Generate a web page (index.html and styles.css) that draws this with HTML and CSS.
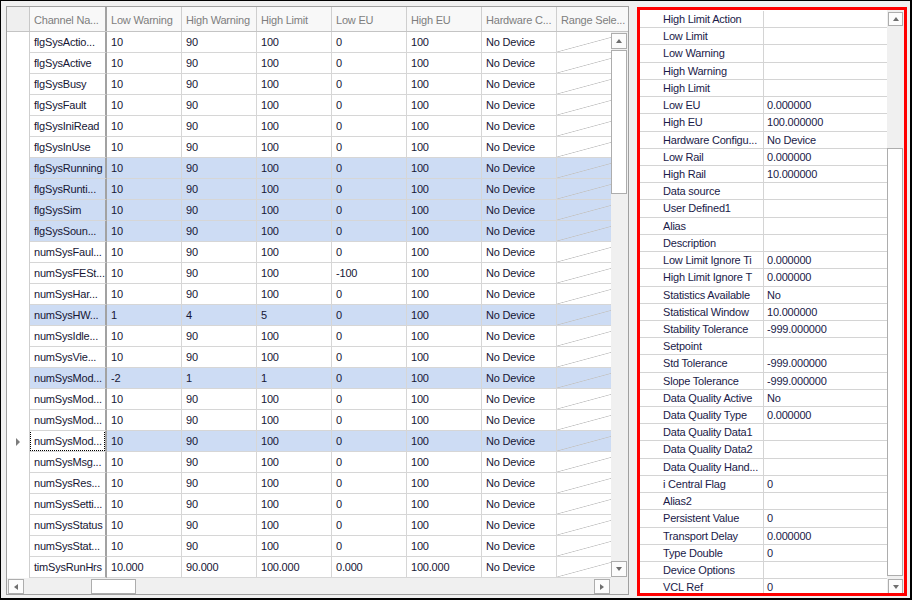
FILE: index.html
```html
<!DOCTYPE html>
<html>
<head>
<meta charset="utf-8">
<link rel="stylesheet" href="styles.css">
</head>
<body>
<div class="window">
  <div class="grid">
    <div class="ghead">
      <div class="hc ind"></div>
      <div class="hc name">Channel Na...</div>
      <div class="hc">Low Warning</div>
      <div class="hc">High Warning</div>
      <div class="hc">High Limit</div>
      <div class="hc">Low EU</div>
      <div class="hc">High EU</div>
      <div class="hc">Hardware C...</div>
      <div class="hc">Range Sele...</div>
    </div>
    <div class="gbody">
      <div class="rows">
        <div class="row"><div class="ind"></div><div class="c name">flgSysActio...</div><div class="c">10</div><div class="c">90</div><div class="c">100</div><div class="c">0</div><div class="c">100</div><div class="c">No Device</div><div class="c rng"></div></div>
        <div class="row"><div class="ind"></div><div class="c name">flgSysActive</div><div class="c">10</div><div class="c">90</div><div class="c">100</div><div class="c">0</div><div class="c">100</div><div class="c">No Device</div><div class="c rng"></div></div>
        <div class="row"><div class="ind"></div><div class="c name">flgSysBusy</div><div class="c">10</div><div class="c">90</div><div class="c">100</div><div class="c">0</div><div class="c">100</div><div class="c">No Device</div><div class="c rng"></div></div>
        <div class="row"><div class="ind"></div><div class="c name">flgSysFault</div><div class="c">10</div><div class="c">90</div><div class="c">100</div><div class="c">0</div><div class="c">100</div><div class="c">No Device</div><div class="c rng"></div></div>
        <div class="row"><div class="ind"></div><div class="c name">flgSysIniRead</div><div class="c">10</div><div class="c">90</div><div class="c">100</div><div class="c">0</div><div class="c">100</div><div class="c">No Device</div><div class="c rng"></div></div>
        <div class="row"><div class="ind"></div><div class="c name">flgSysInUse</div><div class="c">10</div><div class="c">90</div><div class="c">100</div><div class="c">0</div><div class="c">100</div><div class="c">No Device</div><div class="c rng"></div></div>
        <div class="row hl"><div class="ind"></div><div class="c name">flgSysRunning</div><div class="c">10</div><div class="c">90</div><div class="c">100</div><div class="c">0</div><div class="c">100</div><div class="c">No Device</div><div class="c rng"></div></div>
        <div class="row hl"><div class="ind"></div><div class="c name">flgSysRunti...</div><div class="c">10</div><div class="c">90</div><div class="c">100</div><div class="c">0</div><div class="c">100</div><div class="c">No Device</div><div class="c rng"></div></div>
        <div class="row hl"><div class="ind"></div><div class="c name">flgSysSim</div><div class="c">10</div><div class="c">90</div><div class="c">100</div><div class="c">0</div><div class="c">100</div><div class="c">No Device</div><div class="c rng"></div></div>
        <div class="row hl"><div class="ind"></div><div class="c name">flgSysSoun...</div><div class="c">10</div><div class="c">90</div><div class="c">100</div><div class="c">0</div><div class="c">100</div><div class="c">No Device</div><div class="c rng"></div></div>
        <div class="row"><div class="ind"></div><div class="c name">numSysFaul...</div><div class="c">10</div><div class="c">90</div><div class="c">100</div><div class="c">0</div><div class="c">100</div><div class="c">No Device</div><div class="c rng"></div></div>
        <div class="row"><div class="ind"></div><div class="c name">numSysFESt...</div><div class="c">10</div><div class="c">90</div><div class="c">100</div><div class="c">-100</div><div class="c">100</div><div class="c">No Device</div><div class="c rng"></div></div>
        <div class="row"><div class="ind"></div><div class="c name">numSysHar...</div><div class="c">10</div><div class="c">90</div><div class="c">100</div><div class="c">0</div><div class="c">100</div><div class="c">No Device</div><div class="c rng"></div></div>
        <div class="row hl"><div class="ind"></div><div class="c name">numSysHW...</div><div class="c">1</div><div class="c">4</div><div class="c">5</div><div class="c">0</div><div class="c">100</div><div class="c">No Device</div><div class="c rng"></div></div>
        <div class="row"><div class="ind"></div><div class="c name">numSysIdle...</div><div class="c">10</div><div class="c">90</div><div class="c">100</div><div class="c">0</div><div class="c">100</div><div class="c">No Device</div><div class="c rng"></div></div>
        <div class="row"><div class="ind"></div><div class="c name">numSysVie...</div><div class="c">10</div><div class="c">90</div><div class="c">100</div><div class="c">0</div><div class="c">100</div><div class="c">No Device</div><div class="c rng"></div></div>
        <div class="row hl"><div class="ind"></div><div class="c name">numSysMod...</div><div class="c">-2</div><div class="c">1</div><div class="c">1</div><div class="c">0</div><div class="c">100</div><div class="c">No Device</div><div class="c rng"></div></div>
        <div class="row"><div class="ind"></div><div class="c name">numSysMod...</div><div class="c">10</div><div class="c">90</div><div class="c">100</div><div class="c">0</div><div class="c">100</div><div class="c">No Device</div><div class="c rng"></div></div>
        <div class="row"><div class="ind"></div><div class="c name">numSysMod...</div><div class="c">10</div><div class="c">90</div><div class="c">100</div><div class="c">0</div><div class="c">100</div><div class="c">No Device</div><div class="c rng"></div></div>
        <div class="row hl sel"><div class="ind"><span class="rowmark"></span></div><div class="c name focus">numSysMod...</div><div class="c">10</div><div class="c">90</div><div class="c">100</div><div class="c">0</div><div class="c">100</div><div class="c">No Device</div><div class="c rng"></div></div>
        <div class="row"><div class="ind"></div><div class="c name">numSysMsg...</div><div class="c">10</div><div class="c">90</div><div class="c">100</div><div class="c">0</div><div class="c">100</div><div class="c">No Device</div><div class="c rng"></div></div>
        <div class="row"><div class="ind"></div><div class="c name">numSysRes...</div><div class="c">10</div><div class="c">90</div><div class="c">100</div><div class="c">0</div><div class="c">100</div><div class="c">No Device</div><div class="c rng"></div></div>
        <div class="row"><div class="ind"></div><div class="c name">numSysSetti...</div><div class="c">10</div><div class="c">90</div><div class="c">100</div><div class="c">0</div><div class="c">100</div><div class="c">No Device</div><div class="c rng"></div></div>
        <div class="row"><div class="ind"></div><div class="c name">numSysStatus</div><div class="c">10</div><div class="c">90</div><div class="c">100</div><div class="c">0</div><div class="c">100</div><div class="c">No Device</div><div class="c rng"></div></div>
        <div class="row"><div class="ind"></div><div class="c name">numSysStat...</div><div class="c">10</div><div class="c">90</div><div class="c">100</div><div class="c">0</div><div class="c">100</div><div class="c">No Device</div><div class="c rng"></div></div>
        <div class="row"><div class="ind"></div><div class="c name">timSysRunHrs</div><div class="c">10.000</div><div class="c">90.000</div><div class="c">100.000</div><div class="c">0.000</div><div class="c">100.000</div><div class="c">No Device</div><div class="c rng"></div></div>
      </div>
      <div class="vscroll">
        <div class="sbtn vbtn"><span class="tri up"></span></div>
        <div class="thumb vthumb"></div>
        <div class="track"></div>
        <div class="sbtn vbtn"><span class="tri down"></span></div>
      </div>
    </div>
    <div class="hbar">
      <div class="hscroll">
        <div class="sbtn hbtn"><span class="tri left"></span></div>
        <div class="hgap"></div>
        <div class="thumb hthumb"></div>
        <div class="track"></div>
        <div class="sbtn hbtn"><span class="tri right"></span></div>
      </div>
      <div class="corner"></div>
    </div>
  </div>

  <div class="props">
    <div class="plist">
      <div class="prow"><div class="pind"></div><div class="pname">High Limit Action</div><div class="pval"></div></div>
      <div class="prow"><div class="pind"></div><div class="pname">Low Limit</div><div class="pval"></div></div>
      <div class="prow"><div class="pind"></div><div class="pname">Low Warning</div><div class="pval"></div></div>
      <div class="prow"><div class="pind"></div><div class="pname">High Warning</div><div class="pval"></div></div>
      <div class="prow"><div class="pind"></div><div class="pname">High Limit</div><div class="pval"></div></div>
      <div class="prow"><div class="pind"></div><div class="pname">Low EU</div><div class="pval">0.000000</div></div>
      <div class="prow"><div class="pind"></div><div class="pname">High EU</div><div class="pval">100.000000</div></div>
      <div class="prow"><div class="pind"></div><div class="pname">Hardware Configu...</div><div class="pval">No Device</div></div>
      <div class="prow"><div class="pind"></div><div class="pname">Low Rail</div><div class="pval">0.000000</div></div>
      <div class="prow"><div class="pind"></div><div class="pname">High Rail</div><div class="pval">10.000000</div></div>
      <div class="prow"><div class="pind"></div><div class="pname">Data source</div><div class="pval"></div></div>
      <div class="prow"><div class="pind"></div><div class="pname">User Defined1</div><div class="pval"></div></div>
      <div class="prow"><div class="pind"></div><div class="pname">Alias</div><div class="pval"></div></div>
      <div class="prow"><div class="pind"></div><div class="pname">Description</div><div class="pval"></div></div>
      <div class="prow"><div class="pind"></div><div class="pname">Low Limit Ignore Ti</div><div class="pval">0.000000</div></div>
      <div class="prow"><div class="pind"></div><div class="pname">High Limit Ignore T</div><div class="pval">0.000000</div></div>
      <div class="prow"><div class="pind"></div><div class="pname">Statistics Available</div><div class="pval">No</div></div>
      <div class="prow"><div class="pind"></div><div class="pname">Statistical Window</div><div class="pval">10.000000</div></div>
      <div class="prow"><div class="pind"></div><div class="pname">Stability Tolerance</div><div class="pval">-999.000000</div></div>
      <div class="prow"><div class="pind"></div><div class="pname">Setpoint</div><div class="pval"></div></div>
      <div class="prow"><div class="pind"></div><div class="pname">Std Tolerance</div><div class="pval">-999.000000</div></div>
      <div class="prow"><div class="pind"></div><div class="pname">Slope Tolerance</div><div class="pval">-999.000000</div></div>
      <div class="prow"><div class="pind"></div><div class="pname">Data Quality Active</div><div class="pval">No</div></div>
      <div class="prow"><div class="pind"></div><div class="pname">Data Quality Type</div><div class="pval">0.000000</div></div>
      <div class="prow"><div class="pind"></div><div class="pname">Data Quality Data1</div><div class="pval"></div></div>
      <div class="prow"><div class="pind"></div><div class="pname">Data Quality Data2</div><div class="pval"></div></div>
      <div class="prow"><div class="pind"></div><div class="pname">Data Quality Hand...</div><div class="pval"></div></div>
      <div class="prow"><div class="pind"></div><div class="pname">i Central Flag</div><div class="pval">0</div></div>
      <div class="prow"><div class="pind"></div><div class="pname">Alias2</div><div class="pval"></div></div>
      <div class="prow"><div class="pind"></div><div class="pname">Persistent Value</div><div class="pval">0</div></div>
      <div class="prow"><div class="pind"></div><div class="pname">Transport Delay</div><div class="pval">0.000000</div></div>
      <div class="prow"><div class="pind"></div><div class="pname">Type Double</div><div class="pval">0</div></div>
      <div class="prow"><div class="pind"></div><div class="pname">Device Options</div><div class="pval"></div></div>
      <div class="prow"><div class="pind"></div><div class="pname">VCL Ref</div><div class="pval">0</div></div>
    </div>
    <div class="pscroll">
      <div class="sbtn pbtn-up"><span class="tri up"></span></div>
      <div class="ptrack"></div>
      <div class="thumb pthumb"></div>
      <div class="sbtn pbtn-down"><span class="tri down"></span></div>
    </div>
  </div>
</div>
</body>
</html>
```

FILE: styles.css
```css
* { box-sizing: border-box; }
html, body { margin: 0; padding: 0; }
body {
  font-family: "Liberation Sans", Arial, sans-serif;
  font-size: 11px;
  letter-spacing: -0.2px;
  color: #161634;
}
.window {
  width: 912px;
  height: 600px;
  background: #f0f0f0;
  border-top: 1px solid #000;
  border-left: 1px solid #000;
  border-right: 2px solid #000;
  border-bottom: 2px solid #000;
  padding: 5px 0 0 5px;
  display: flex;
  align-items: flex-start;
  gap: 8px;
  overflow: hidden;
}

/* ---------- data grid ---------- */
.grid {
  width: 623px;
  height: 589px;
  border: 1px solid #a0a0a0;
  background: #fff;
  display: flex;
  flex-direction: column;
  overflow: hidden;
  flex: none;
}
.ghead {
  display: grid;
  grid-template-columns: 23px 77px repeat(7, 75px);
  height: 25px;
  flex: none;
  border-bottom: 1px solid #c4c4c4;
  background: #f8f8f8;
  overflow: hidden;
}
.hc {
  border-right: 1px solid #cfcfcf;
  color: #7e7e7e;
  padding: 4px 0 0 4px;
  line-height: 19px;
  white-space: nowrap;
  overflow: hidden;
}
.hc.ind { background: #efefef; border-right-color: #c8c8c8; }
.hc.name { border-right: 2px solid #a2a2a2; }

.gbody {
  display: flex;
  height: 546px;
  flex: none;
}
.rows {
  width: 604px;
  flex: none;
  overflow: hidden;
}
.row {
  display: grid;
  grid-template-columns: 23px 77px repeat(7, 75px);
  height: 21px;
}
.ind {
  border-right: 1px solid #cfcfcf;
  background: #fff;
  display: flex;
  align-items: center;
  padding-left: 9px;
}
.c {
  border-right: 1px solid #d6d6d6;
  border-bottom: 1px solid #d6d6d6;
  padding-left: 4px;
  line-height: 20px;
  white-space: nowrap;
  overflow: hidden;
  background: #fff;
}
.c.name { border-right: 2px solid #a2a2a2; }
.row.hl .c { background-color: #cddcf4; }
.row.sel .c.name { background: #fff; }
.c.focus { position: relative; }
.c.focus::after {
  content: "";
  position: absolute;
  left: 0; top: -1px; right: 0; bottom: 0;
  border: 1px dotted #000;
}
.c.rng {
  background-image: linear-gradient(to bottom right, transparent calc(50% - 0.7px), #c4c4c4 50%, transparent calc(50% + 0.7px));
}
.rowmark {
  width: 0; height: 0;
  border-left: 4px solid #7c7c7c;
  border-top: 4px solid transparent;
  border-bottom: 4px solid transparent;
}

/* ---------- scrollbars ---------- */
.sbtn {
  border: 1px solid #adadad;
  background: #fcfcfc;
  display: flex;
  align-items: center;
  justify-content: center;
  flex: none;
}
.thumb {
  border: 1px solid #adadad;
  background: #fff;
  flex: none;
}
.track { flex: 1; }
.tri { width: 0; height: 0; }
.tri.up { border-left: 3.5px solid transparent; border-right: 3.5px solid transparent; border-bottom: 4px solid #6e6e6e; }
.tri.down { border-left: 3.5px solid transparent; border-right: 3.5px solid transparent; border-top: 4px solid #6e6e6e; }
.tri.left { border-top: 3.5px solid transparent; border-bottom: 3.5px solid transparent; border-right: 4px solid #6e6e6e; }
.tri.right { border-top: 3.5px solid transparent; border-bottom: 3.5px solid transparent; border-left: 4px solid #6e6e6e; }

.vscroll {
  width: 17px;
  flex: none;
  background: #f0f0f0;
  display: flex;
  flex-direction: column;
  padding: 1px 1px 1px 0;
}
.vbtn { height: 16px; }
.vthumb { height: 144px; margin-top: 1px; }

.hbar { display: flex; height: 16px; flex: none; }
.hscroll {
  width: 604px;
  background: #f0f0f0;
  display: flex;
  padding: 1px 1px 0 1px;
}
.hbtn { width: 16px; height: 15px; }
.hgap { width: 67px; flex: none; }
.hthumb { width: 45px; height: 15px; }
.corner { flex: 1; background: #f0f0f0; }

/* ---------- property grid ---------- */
.props {
  width: 270px;
  height: 589px;
  margin-top: 1px;
  border: 3px solid #ff0000;
  background: #fff;
  display: flex;
  overflow: hidden;
  flex: none;
}
.plist {
  width: 247px;
  flex: none;
  overflow: hidden;
  padding-top: 1px;
}
.prow {
  display: grid;
  grid-template-columns: 20px 104px 123px;
  height: 17.22px;
  border-bottom: 1px solid #d4d4d4;
  line-height: 16px;
  color: #1a1a48;
}
.pname {
  border-right: 1px solid #d4d4d4;
  padding-left: 3px;
  white-space: nowrap;
  overflow: hidden;
}
.pval {
  padding-left: 3px;
  white-space: nowrap;
  overflow: hidden;
}
.pscroll {
  width: 17px;
  flex: none;
  background: #f0f0f0;
  display: flex;
  flex-direction: column;
}
.pbtn-up { height: 14px; margin: 2px 1px 0 1px; }
.ptrack { height: 122px; flex: none; }
.pthumb { height: 428px; margin-right: 1px; }
.pbtn-down { height: 15px; margin: 3px 1px 0 1px; }
```
